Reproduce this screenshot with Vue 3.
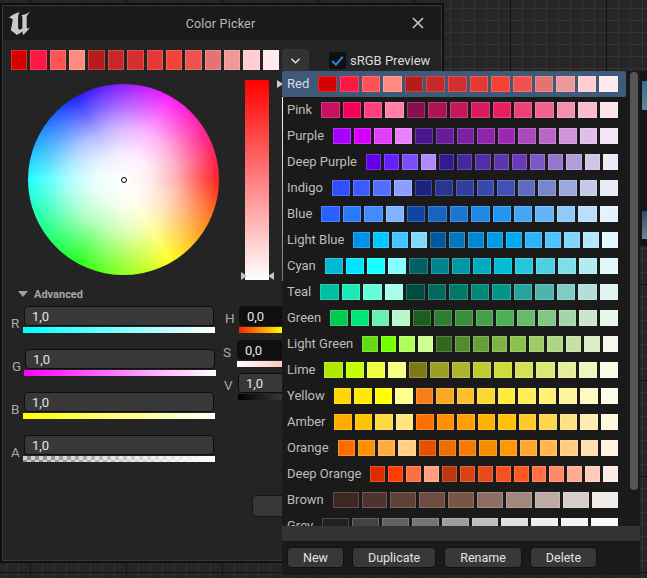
<script setup>
const parse = (s) => s.split(' ').map((c) => '#' + c)
const palettes = [
  ['Red', 'd50000 ff1744 ff5252 ff8a80 b71c1c c62828 d32f2f e53935 f44336 ef5350 e57373 ef9a9a ffcdd2 ffebee'],
  ['Pink', 'c51162 f50057 ff4081 ff80ab 880e4f ad1457 c2185b d81b60 e91e63 ec407a f06292 f48fb1 f8bbd0 fce4ec'],
  ['Purple', 'aa00ff d500f9 e040fb ea80fc 4a148c 6a1b9a 7b1fa2 8e24aa 9c27b0 ab47bc ba68c8 ce93d8 e1bee7 f3e5f5'],
  ['Deep Purple', '6200ea 651fff 7c4dff b388ff 311b92 4527a0 512da8 5e35b1 673ab7 7e57c2 9575cd b39ddb d1c4e9 ede7f6'],
  ['Indigo', '304ffe 3d5afe 536dfe 8c9eff 1a237e 283593 303f9f 3949ab 3f51b5 5c6bc0 7986cb 9fa8da c5cae9 e8eaf6'],
  ['Blue', '2962ff 2979ff 448aff 82b1ff 0d47a1 1565c0 1976d2 1e88e5 2196f3 42a5f5 64b5f6 90caf9 bbdefb e3f2fd'],
  ['Light Blue', '0091ea 00c8ff 40c4ff 80d8ff 01579b 0277bd 0288d1 039be5 03a9f4 29b6f6 4fc3f7 81d4fa b3e5fc e1f5fe'],
  ['Cyan', '00b8d4 00e5ff 18ffff 84ffff 006064 00838f 0097a7 00acc1 00bcd4 26c6da 4dd0e1 80deea b2ebf2 e0f7fa'],
  ['Teal', '00bfa5 1de9b6 64ffda a7ffeb 004d40 00695c 00796b 00897b 009688 26a69a 4db6ac 80cbc4 b2dfdb e0f2f1'],
  ['Green', '00c853 00e676 69f0ae b9f6ca 1b5e20 2e7d32 388e3c 43a047 4caf50 66bb6a 81c784 a5d6a7 c8e6c9 e8f5e9'],
  ['Light Green', '64dd17 76ff03 b2ff59 ccff90 33691e 558b2f 689f38 7cb342 8bc34a 9ccc65 aed581 c5e1a5 dcedc8 f1f8e9'],
  ['Lime', 'aeea00 c6ff00 eeff41 f4ff81 827717 9e9d24 afb42b c0ca33 cddc39 d4e157 dce775 e6ee9c f0f4c3 f9fbe7'],
  ['Yellow', 'ffd600 ffea00 ffff00 ffff8d f57f17 f9a825 fbc02d fdd835 ffeb3b ffee58 fff176 fff59d fff9c4 fffde7'],
  ['Amber', 'ffab00 ffc400 ffd740 ffe57f ff6f00 ff8f00 ffa000 ffb300 ffc107 ffca28 ffd54f ffe082 ffecb3 fff8e1'],
  ['Orange', 'ff6d00 ff9100 ffab40 ffd180 e65100 ef6c00 f57c00 fb8c00 ff9800 ffa726 ffb74d ffcc80 ffe0b2 fff3e0'],
  ['Deep Orange', 'dd2c00 ff3d00 ff6e40 ff9e80 bf360c d84315 e64a19 f4511e ff5722 ff7043 ff8a65 ffab91 ffccbc fbe9e7'],
  ['Brown', '3e2723 4e342e 5d4037 6d4c41 795548 8d6e63 a1887f bcaaa4 d7ccc8 efebe9'],
  ['Grey', '212121 424242 616161 757575 9e9e9e bdbdbd e0e0e0 eeeeee f5f5f5 fafafa'],
].map(([name, colors]) => ({ name, colors: parse(colors) }))
const current = palettes[0].colors
const rgba = [
  { label: 'R', cls: 'bar-r' },
  { label: 'G', cls: 'bar-g', nudge: true },
  { label: 'B', cls: 'bar-b' },
  { label: 'A', cls: 'bar-a' },
]
const hsv = [
  { label: 'H', value: '0,0', cls: 'bar-h', dark: true, tag: 'h' },
  { label: 'S', value: '0,0', cls: 'bar-s', dark: true, tag: 's' },
  { label: 'V', value: '1,0', cls: 'bar-v', dark: false, tag: 'v' },
]
const actions = ['New', 'Duplicate', 'Rename', 'Delete']
</script>

<template>
  <div class="page">
    <section class="window">
      <header class="titlebar">
        <svg class="logo" viewBox="0 0 24 24" aria-hidden="true">
          <path d="M1 6C4 3 8 1 12 0C11 2 10.5 4 10.5 6V16C10.5 18 12 19 13.5 18L15 17V7C15 5 15 4 14 3C17 3 19 2 23 0C21 2 19.5 4 19.5 6V15C19.5 17 20 18 23 16.5C20 20 18 22 16 24C15 22 15 21 15 20C13 22 11 23 9 24C8 22 5 21 3 19L5 8C4 7 3 6 1 6Z" />
        </svg>
        <span class="title">Color Picker</span>
        <svg class="close" viewBox="0 0 12 12" aria-hidden="true">
          <path d="M1 1L11 11M11 1L1 11" />
        </svg>
      </header>

      <div class="content">
        <div class="toolbar">
          <div class="current">
            <i v-for="c in current" :key="c" class="swatch" :style="{ background: c }"></i>
          </div>
          <button class="chevron" type="button">
            <svg viewBox="0 0 12 8" aria-hidden="true"><path d="M1.5 1.5L6 6L10.5 1.5" /></svg>
          </button>
          <span class="check">
            <svg viewBox="0 0 16 16" aria-hidden="true"><path d="M3 8.5L6.5 12L13 4.5" /></svg>
          </span>
          <span class="check-label">sRGB Preview</span>
        </div>

        <div class="picker">
          <div class="wheel"><i class="dot"></i></div>
          <div class="vbar">
            <i class="tri tri-top"></i>
            <i class="tri tri-left"></i>
            <i class="tri tri-right"></i>
          </div>
        </div>

        <div class="advanced"><i class="caret"></i>Advanced</div>

        <div class="sliders">
          <div class="rgba">
            <div v-for="r in rgba" :key="r.label" class="rgba-row" :class="{ nudge: r.nudge }">
              <span class="axis">{{ r.label }}</span>
              <div class="stack">
                <div class="field">1,0</div>
                <div class="bar" :class="r.cls"></div>
              </div>
            </div>
          </div>
          <div class="hsv">
            <div v-for="h in hsv" :key="h.label" class="hsv-row" :class="'row-' + h.tag">
              <span class="axis">{{ h.label }}</span>
              <div class="stack">
                <div class="field" :class="{ dark: h.dark }">{{ h.value }}</div>
                <div class="bar" :class="h.cls"></div>
              </div>
            </div>
          </div>
        </div>

        <div class="footer-button"></div>
      </div>
    </section>

    <aside class="menu">
      <div class="list">
        <div v-for="(p, i) in palettes" :key="p.name" class="row" :class="{ active: i === 0 }">
          <span class="name">{{ p.name }}</span>
          <div class="colors">
            <i v-for="c in p.colors" :key="c" class="swatch small" :style="{ background: c }"></i>
          </div>
        </div>
        <div class="vscroll"></div>
      </div>
      <div class="hscroll"></div>
      <div class="actions">
        <button v-for="a in actions" :key="a" class="action" type="button">{{ a }}</button>
      </div>
    </aside>

    <div class="node">
      <i class="thumb"></i>
      <i class="thumb second"></i>
    </div>
  </div>
</template>

<style>
html, body { margin: 0; background: #1a1a1a; }
</style>

<style scoped>
.page {
  position: relative;
  width: 647px;
  height: 578px;
  overflow: hidden;
  font-family: Roboto, "Liberation Sans", sans-serif;
  background-color: #262626;
  background-image:
    linear-gradient(#131313 1px, transparent 1px),
    linear-gradient(90deg, #131313 1px, transparent 1px),
    linear-gradient(#333 1px, transparent 1px),
    linear-gradient(90deg, #333 1px, transparent 1px);
  background-size: 100% 96px, 96px 100%, 100% 12px, 12px 100%;
  background-position: 0 92px, 30px 0, 0 8px, 6px 0;
}

.window {
  position: absolute;
  left: 2px;
  top: 5px;
  width: 438px;
  height: 554px;
  background: #242424;
  border: 1px solid #3a3a3a;
  box-shadow: 0 0 0 2px #0f0f0f;
  overflow: hidden;
}

.titlebar {
  display: grid;
  grid-template-columns: 1fr auto 1fr;
  align-items: center;
  height: 34px;
  padding: 0 8px 0 5px;
  background: #1a1a1a;
}
.logo { width: 23px; height: 23px; fill: #c9c9c9; }
.title { font-size: 12.5px; color: #b8b8b8; letter-spacing: 0.2px; }
.close {
  justify-self: end;
  width: 12px;
  height: 12px;
  margin-right: 9px;
  fill: none;
  stroke: #cfcfcf;
  stroke-width: 1.5;
}

.content { padding: 10px 0 0 8px; }

.toolbar { display: flex; align-items: flex-start; height: 20px; }
.current { display: flex; gap: 3px; width: 268px; height: 20px; }
.swatch {
  display: block;
  flex: 1;
  box-shadow: inset 0 0 0 1px rgba(255, 255, 255, 0.18);
}
.chevron {
  display: flex;
  align-items: center;
  justify-content: center;
  width: 27px;
  height: 24px;
  margin: -1px 0 0 3px;
  padding: 0;
  border: 0;
  border-radius: 4px;
  background: #333;
}
.chevron svg { width: 11px; height: 8px; fill: none; stroke: #e4e4e4; stroke-width: 1.6; }
.check {
  display: block;
  width: 17px;
  height: 17px;
  margin: 2px 0 0 20px;
  border-radius: 3px;
  background: #0f0f0f;
}
.check svg { display: block; width: 17px; height: 17px; fill: none; stroke: #2b7fd6; stroke-width: 2; }
.check-label { margin: 2px 0 0 4px; font-size: 13px; line-height: 17px; color: #dcdcdc; white-space: nowrap; }

.picker { display: flex; align-items: flex-start; margin-top: 10px; }
.wheel {
  position: relative;
  width: 191px;
  height: 191px;
  margin: 4px 0 0 17px;
  border-radius: 50%;
  background:
    radial-gradient(closest-side, #fff, rgba(255, 255, 255, 0.93) 28%, rgba(255, 255, 255, 0.7) 55%, rgba(255, 255, 255, 0.36) 80%, rgba(255, 255, 255, 0.12) 100%),
    conic-gradient(from 90deg, #f00, #ff0, #0f0, #0ff, #00f, #f0f, #f00);
}
.dot {
  position: absolute;
  left: 50%;
  top: 50%;
  width: 6px;
  height: 6px;
  margin: -3px 0 0 -3px;
  border: 1.5px solid #000;
  border-radius: 50%;
  background: #fff;
  box-sizing: border-box;
}
.vbar {
  position: relative;
  width: 24px;
  height: 200px;
  margin-left: 26px;
  background: linear-gradient(#f00, #fff);
}
.tri {
  position: absolute;
  width: 0;
  height: 0;
  border-style: solid;
}
.tri-top { left: 32px; top: 0; border-width: 4px 0 4px 6px; border-color: transparent transparent transparent #cfcfcf; }
.tri-left { left: -4px; bottom: 0; border-width: 4px 0 4px 6px; border-color: transparent transparent transparent #c4c4c4; }
.tri-right { right: -5px; bottom: 0; border-width: 4px 6px 4px 0; border-color: transparent #c4c4c4 transparent transparent; }

.advanced {
  display: flex;
  align-items: center;
  height: 14px;
  margin: 7px 0 0 7px;
  font-size: 11px;
  font-weight: 700;
  color: #a8a8a8;
}
.caret {
  width: 0;
  height: 0;
  margin-right: 6px;
  border-style: solid;
  border-width: 6px 5px 0;
  border-color: #a0a0a0 transparent transparent;
}

.sliders { display: flex; align-items: flex-start; margin-top: 5px; }
.rgba { display: flex; flex-direction: column; gap: 16px; width: 214px; flex: none; }
.rgba-row { display: flex; align-items: flex-start; }
.rgba-row.nudge { transform: translateX(1px); }
.axis {
  flex: none;
  width: 12px;
  padding-top: 9px;
  font-size: 13.5px;
  line-height: 16px;
  color: #a8a8a8;
}
.stack { flex: none; width: 192px; }
.field {
  box-sizing: border-box;
  width: 190px;
  height: 20px;
  margin: 0 auto 1px;
  padding-left: 7px;
  border: 1px solid #0e0e0e;
  border-radius: 4px;
  background: #383838;
  font-size: 13px;
  line-height: 19px;
  color: #e6e6e6;
}
.field.dark { background: #0f0f0f; border-color: #0f0f0f; }
.bar { height: 6px; }
.bar-r { background: linear-gradient(90deg, #0ff, #fff); }
.bar-g { background: linear-gradient(90deg, #f0f, #fff); }
.bar-b { background: linear-gradient(90deg, #ff0, #fff); }
.bar-a {
  background:
    linear-gradient(90deg, rgba(255, 255, 255, 0), #fff),
    repeating-conic-gradient(#858585 0 25%, #cfcfcf 0 50%) 0 0 / 8px 8px;
}
.bar-h { background: linear-gradient(90deg, #f20, #ff0 43px, #0f0 86px, #0ff 129px); }
.bar-s { background: linear-gradient(90deg, #fff, #f00); }
.bar-v { background: linear-gradient(90deg, #000, #fff); }

.hsv { display: flex; flex-direction: column; }
.hsv-row { display: flex; align-items: flex-start; }
.hsv .axis { width: 14px; padding-top: 4px; }
.hsv .stack { width: 200px; }
.hsv .field { width: 200px; }
.row-s { margin-top: 7px; margin-left: -2px; }
.row-v { margin-top: 6px; margin-left: -1px; }

.footer-button {
  box-sizing: border-box;
  width: 80px;
  height: 22px;
  margin: 33px 0 0 241px;
  border: 1px solid #141414;
  border-radius: 4px;
  background: #383838;
}

.menu {
  position: absolute;
  left: 282px;
  top: 71px;
  width: 358px;
  height: 504px;
  background: #1a1a1a;
}
.menu::before {
  content: "";
  position: absolute;
  left: 0;
  top: 26px;
  width: 1px;
  height: 184px;
  background: linear-gradient(#fff, #777);
  z-index: 1;
}
.list { position: relative; height: 455px; overflow: hidden; }
.row {
  box-sizing: border-box;
  display: flex;
  align-items: center;
  width: 344px;
  height: 26px;
  padding: 0 8px 0 5px;
  border-radius: 2px;
}
.row.active { background: #3e5a78; }
.name { flex: none; margin: -2px 9px 0 0; font-size: 13px; color: #bdbdbd; white-space: nowrap; }
.active .name { color: #d6dde5; }
.colors { display: flex; flex: 1; gap: 3px; height: 16px; }
.vscroll {
  position: absolute;
  left: 348px;
  top: 1px;
  width: 8px;
  height: 418px;
  border-radius: 4px;
  background: #555;
}
.hscroll { height: 15px; background: #333; }
.actions { display: flex; gap: 8px; padding: 6px 0 0 5px; }
.action {
  box-sizing: border-box;
  height: 21px;
  padding: 0 15px;
  border: 1px solid #111;
  border-radius: 4px;
  background: #383838;
  font-family: inherit;
  font-size: 12.5px;
  line-height: 19px;
  color: #e2e2e2;
}

.node {
  position: absolute;
  left: 640px;
  top: 71px;
  display: flex;
  flex-direction: column;
  width: 7px;
  height: 175px;
  background: #151515;
}
.thumb {
  display: block;
  height: 29px;
  margin: 10px 0 0 2px;
  background: linear-gradient(#2d6f8c, #5c8a9a);
}
.thumb.second { margin-top: 101px; height: 28px; background: linear-gradient(#274f66, #6a8796); }
</style>
